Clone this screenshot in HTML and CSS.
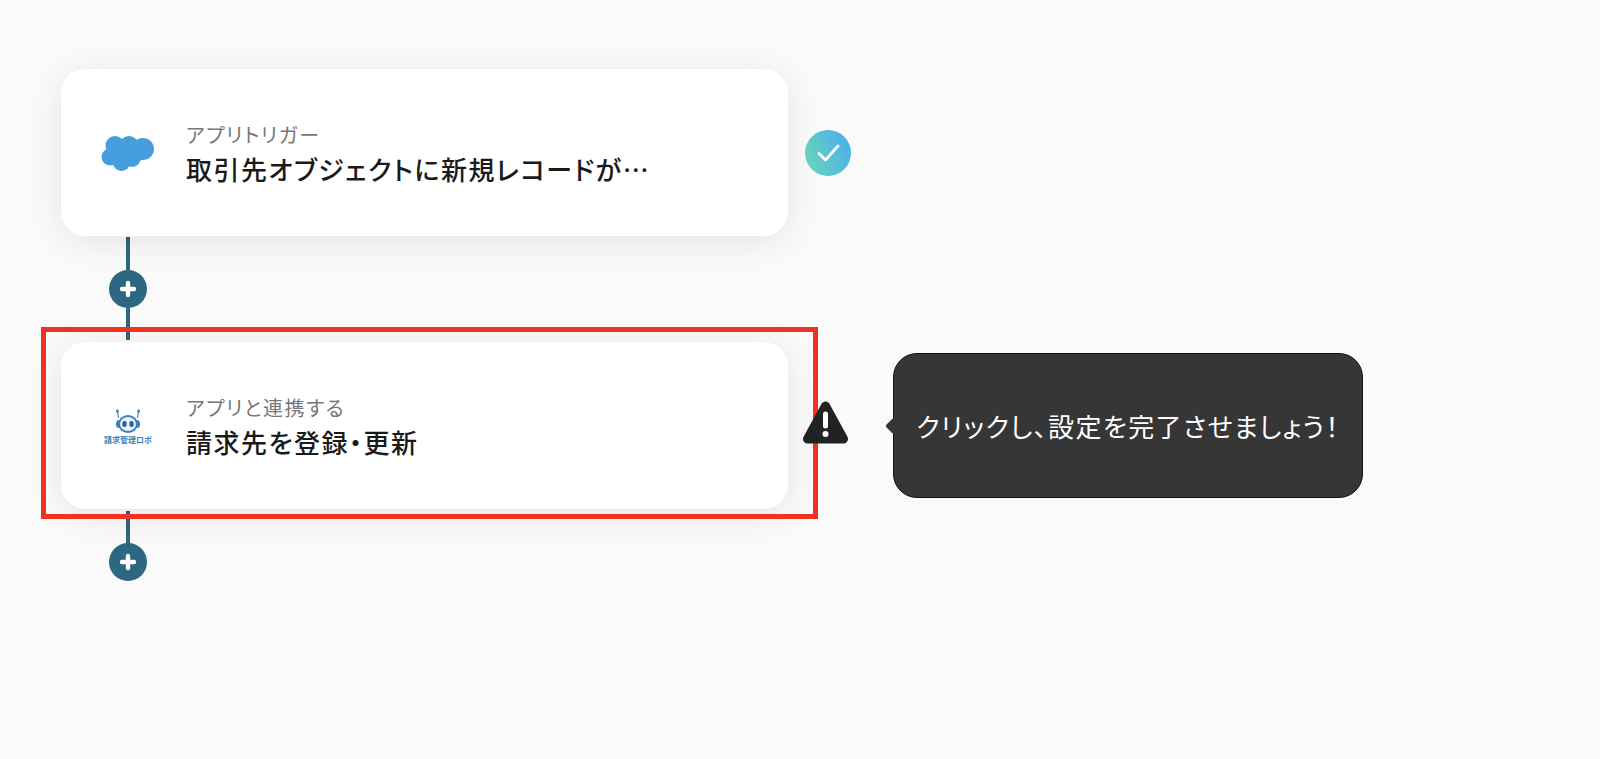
FILE: index.html
```html
<!DOCTYPE html>
<html lang="ja">
<head>
<meta charset="utf-8">
<title>フロー</title>
<link rel="stylesheet" href="styles.css">
</head>
<body>
<main class="flow">
  <section class="step">
    <div class="card">
      <div class="card-icon">
        <svg class="cloud" width="56" height="40" viewBox="0 0 56 40" aria-hidden="true">
          <g fill="#469fdc">
            <circle cx="15" cy="12.5" r="9.5"/>
            <circle cx="29" cy="12.5" r="9.5"/>
            <circle cx="43" cy="16" r="11"/>
            <circle cx="10" cy="24" r="8.5"/>
            <circle cx="21.5" cy="29" r="9"/>
            <circle cx="32" cy="25" r="9"/>
            <rect x="12" y="12" width="30" height="15"/>
          </g>
        </svg>
      </div>
      <div class="card-text">
        <p class="card-label">アプリトリガー</p>
        <p class="card-title">取引先オブジェクトに新規レコードが…</p>
      </div>
    </div>
    <div class="status">
      <svg width="46" height="46" viewBox="0 0 46 46" aria-hidden="true">
        <defs>
          <linearGradient id="ok" x1="0" y1="0.8" x2="1" y2="0.3">
            <stop offset="0" stop-color="#68d5bc"/>
            <stop offset="1" stop-color="#4cb0e8"/>
          </linearGradient>
        </defs>
        <circle cx="23" cy="23" r="23" fill="url(#ok)"/>
        <path d="M14 23.5 L20.5 30 L33 16" fill="none" stroke="#fff" stroke-width="2.8" stroke-linecap="round" stroke-linejoin="round"/>
      </svg>
    </div>
  </section>

  <div class="connector">
    <span class="line line-a"></span>
    <span class="plus"><svg width="18" height="18" viewBox="0 0 18 18" aria-hidden="true"><path d="M9 3 V15 M3 9 H15" stroke="#fff" stroke-width="4.4" stroke-linecap="round"/></svg></span>
    <span class="line line-b"></span>
  </div>

  <section class="step">
    <div class="card">
      <div class="card-icon">
        <div class="robo">
          <svg width="30" height="25" viewBox="0 0 30 25" aria-hidden="true">
            <path d="M4.5 4 L5.5 10 M25.5 4 L24.5 10" stroke="#3c7fbd" stroke-width="1.1"/>
            <circle cx="4.4" cy="3" r="1.5" fill="#3c7fbd"/>
            <circle cx="25.6" cy="3" r="1.5" fill="#3c7fbd"/>
            <rect x="3" y="12" width="24" height="8" rx="3.5" fill="#3c7fbd"/>
            <ellipse cx="15" cy="16" rx="10" ry="9" fill="#3c7fbd"/>
            <ellipse cx="15" cy="16" rx="8" ry="7" fill="#eaf2fa"/>
            <ellipse cx="11.5" cy="16" rx="2.2" ry="3" fill="#2a5f9e"/>
            <ellipse cx="18.5" cy="16" rx="2.2" ry="3" fill="#2a5f9e"/>
          </svg>
          <span class="robo-name">請求管理ロボ</span>
        </div>
      </div>
      <div class="card-text">
        <p class="card-label">アプリと連携する</p>
        <p class="card-title">請求先を登録・更新</p>
      </div>
      <div class="highlight"></div>
    </div>
    <div class="status status-warn">
      <svg width="50" height="50" viewBox="0 0 50 50" aria-hidden="true">
        <path d="M22.5 5 L40.5 38 H4.5 Z" fill="#222" stroke="#222" stroke-width="9" stroke-linejoin="round"/>
        <path d="M22.5 13 V25" stroke="#fff" stroke-width="5" stroke-linecap="round"/>
        <circle cx="22.5" cy="33" r="3" fill="#fff"/>
      </svg>
    </div>
    <div class="tooltip">クリックし、設定を完了させましょう！</div>
  </section>

  <div class="connector connector-end">
    <span class="line line-c"></span>
    <span class="plus"><svg width="18" height="18" viewBox="0 0 18 18" aria-hidden="true"><path d="M9 3 V15 M3 9 H15" stroke="#fff" stroke-width="4.4" stroke-linecap="round"/></svg></span>
  </div>
</main>
</body>
</html>
```
FILE: styles.css
```css
* { box-sizing: border-box; }
html, body { margin: 0; height: 100%; }
body {
  background: #fafafa;
  color: #1a1a1a;
  font-family: "Noto Sans CJK JP", "Noto Sans", sans-serif;
  overflow: hidden;
}
.flow {
  display: flex;
  flex-direction: column;
  align-items: flex-start;
  padding: 69px 0 0 61px;
}
.step {
  display: flex;
  align-items: center;
}
.card {
  position: relative;
  display: flex;
  align-items: center;
  width: 727px;
  height: 167px;
  background: #fff;
  border-radius: 24px;
  box-shadow: 0 6px 36px rgba(0, 0, 0, 0.09);
}
.card-icon {
  flex: none;
  width: 125px;
  display: flex;
  justify-content: center;
  padding-left: 9px;
}
.cloud { display: block; }
.card-text { min-width: 0; padding-top: 3px; }
.card-label {
  margin: 0;
  font-size: 20px;
  line-height: 28px;
  letter-spacing: 1.5px;
  color: #777;
  font-feature-settings: "palt";
}
.card-title {
  margin: 2px 0 0;
  font-size: 26px;
  line-height: 36px;
  font-weight: 500;
  letter-spacing: 1.5px;
  color: #1a1a1a;
  white-space: nowrap;
  font-feature-settings: "palt";
}
.robo {
  display: flex;
  flex-direction: column;
  align-items: center;
  margin-top: 3px;
}
.robo svg { display: block; }
.robo-name {
  font-size: 8px;
  line-height: 14px;
  color: #3c7fbd;
  font-weight: 700;
  white-space: nowrap;
}
.highlight {
  position: absolute;
  top: -15px;
  bottom: -10px;
  left: -20px;
  right: -30px;
  border: 5px solid #ee3322;
  pointer-events: none;
}
.status {
  flex: none;
  width: 50px;
  margin-left: 15px;
  display: flex;
  justify-content: center;
  position: relative;
  z-index: 2;
}
.status svg { display: block; }
.tooltip {
  position: relative;
  flex: none;
  width: 470px;
  height: 145px;
  margin-left: 40px;
  display: flex;
  align-items: center;
  justify-content: center;
  background: #363636;
  border: 1px solid #111;
  border-radius: 24px;
  color: #fff;
  font-size: 26px;
  letter-spacing: 1.4px;
  font-feature-settings: "palt";
  white-space: nowrap;
}
.tooltip::before {
  content: "";
  position: absolute;
  left: -6px;
  top: 50%;
  width: 14px;
  height: 14px;
  margin-top: -7px;
  background: #363636;
  border-radius: 2px;
  transform: rotate(45deg);
}
.connector {
  display: flex;
  flex-direction: column;
  align-items: center;
  width: 38px;
  height: 106px;
  margin-left: 48px;
  padding: 1px 0 2px;
}
.connector-end {
  height: 72px;
  padding: 2px 0 0;
}
.line {
  display: block;
  width: 4px;
  background: #2e6782;
}
.line-a { height: 33px; }
.line-b { height: 32px; }
.line-c { height: 32px; }
.plus {
  flex: none;
  width: 38px;
  height: 38px;
  border-radius: 50%;
  background: #2e6782;
  display: flex;
  align-items: center;
  justify-content: center;
}
.plus svg { display: block; }
```
